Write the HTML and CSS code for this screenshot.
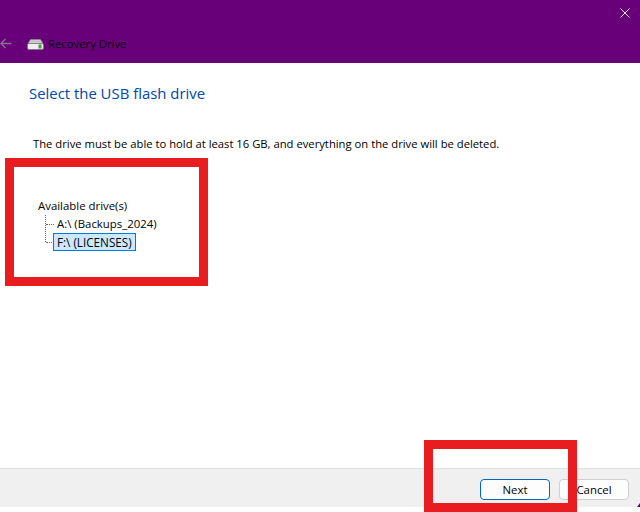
FILE: index.html
```html
<!DOCTYPE html>
<html lang="en">
<head>
<meta charset="utf-8">
<title>Recovery Drive</title>
<link rel="stylesheet" href="styles.css">
</head>
<body>
<div class="window">
  <header class="titlebar">
    <div class="closerow">
      <svg class="close" width="10" height="10" viewBox="0 0 10 10"><path d="M0.5 0.5L9.5 9.5M9.5 0.5L0.5 9.5" stroke="#f2e6f2" stroke-width="1" fill="none"/></svg>
    </div>
    <div class="navrow">
      <svg class="back" width="12" height="11" viewBox="0 0 12 11"><path d="M11.5 5.5H1M5.5 1L1 5.5L5.5 10" stroke="#86708c" stroke-width="1.4" fill="none"/></svg>
      <svg class="driveicon" width="17" height="11" viewBox="0 0 17 11">
        <path d="M3.5 0.5H13.5L16 4.5H1Z" fill="#c9c9c9" stroke="#8f8f8f" stroke-width="0.6"/>
        <rect x="0.5" y="4.5" width="16" height="6" rx="1.5" fill="#eeeeee" stroke="#7a7a7a" stroke-width="0.8"/>
        <rect x="11.5" y="5.5" width="3" height="4" fill="#4a9a3c"/>
      </svg>
      <span class="apptitle">Recovery Drive</span>
    </div>
  </header>
  <main class="content">
    <h1 class="heading">Select the USB flash drive</h1>
    <p class="desc">The drive must be able to hold at least 16 GB, and everything on the drive will be deleted.</p>
    <div class="tree">
      <div class="treeroot">Available drive(s)</div>
      <div class="branches">
        <div class="node"><span class="item">A:\ (Backups_2024)</span></div>
        <div class="node"><span class="item selected">F:\ (LICENSES)</span></div>
      </div>
    </div>
  </main>
  <footer class="footer">
    <button class="btn primary">Next</button>
    <button class="btn">Cancel</button>
  </footer>
</div>
<div class="mark mark-tree"></div>
<div class="mark mark-next"></div>
<div class="corner"></div>
</body>
</html>
```
FILE: styles.css
```css
* { box-sizing: border-box; }
html, body { margin: 0; padding: 0; }
body {
  width: 640px;
  height: 512px;
  overflow: hidden;
  position: relative;
  background: #fff;
  font-family: "Open Sans", "Noto Sans", sans-serif;
  font-size: 11.3px;
  color: #000;
}
.window { display: flex; flex-direction: column; height: 507px; }
.titlebar { height: 63px; background: #68007a; display: flex; flex-direction: column; flex: none; }
.closerow { display: flex; justify-content: flex-end; padding: 8px 10px 0 0; height: 33px; }
.navrow { display: flex; align-items: center; height: 20px; }
.driveicon { margin-left: 15px; margin-top: 3px; }
.apptitle { margin-left: 4px; font-size: 11.3px; color: #08000c; }
.content { flex: 1; padding: 0 0 0 29px; }
.heading { margin: 20px 0 0; font-size: 14.9px; font-weight: 400; line-height: 20px; color: #0046a8; }
.desc { margin: 33px 0 0 4px; font-size: 11.25px; line-height: 16px; white-space: nowrap; }
.tree { margin: 45px 0 0 9px; font-size: 11.4px; line-height: 17px; }
.branches { margin: 1px 0 0 7px; position: relative; border-left: 1px dotted #666; height: 27px; }
.node { display: flex; align-items: center; height: 18px; padding-left: 7px; position: relative; }
.node::before { content: ""; position: absolute; left: 0; top: 9px; width: 8px; border-top: 1px dotted #666; }
.item { padding: 0 2px 0 4px; line-height: 16px; white-space: nowrap; }
.selected { background: #cce8ff; border: 1px solid #0078d7; padding: 0 3px 0 3px; font-size: 11.7px; }
.footer { height: 39px; flex: none; background: #f0f0f0; border-top: 1px solid #dfdfdf; display: flex; justify-content: flex-end; align-items: flex-start; gap: 9px; padding: 10px 11px 0 0; }
.btn { width: 70px; height: 21px; padding: 0; font: inherit; font-size: 11.4px; color: #000; background: #fdfdfd; border: 1px solid #cfcfcf; border-radius: 4px; }
.primary { border: 1px solid #0067c0; }
.mark { position: absolute; border: 9px solid #e91c20; }
.mark-tree { left: 5px; top: 158px; width: 203px; height: 128px; }
.mark-next { left: 424px; top: 440px; width: 153px; height: 72px; }
.corner { position: absolute; right: 0; top: 503px; width: 3px; height: 4px; background: #68007a; clip-path: polygon(100% 0, 100% 100%, 0 100%); }
```
